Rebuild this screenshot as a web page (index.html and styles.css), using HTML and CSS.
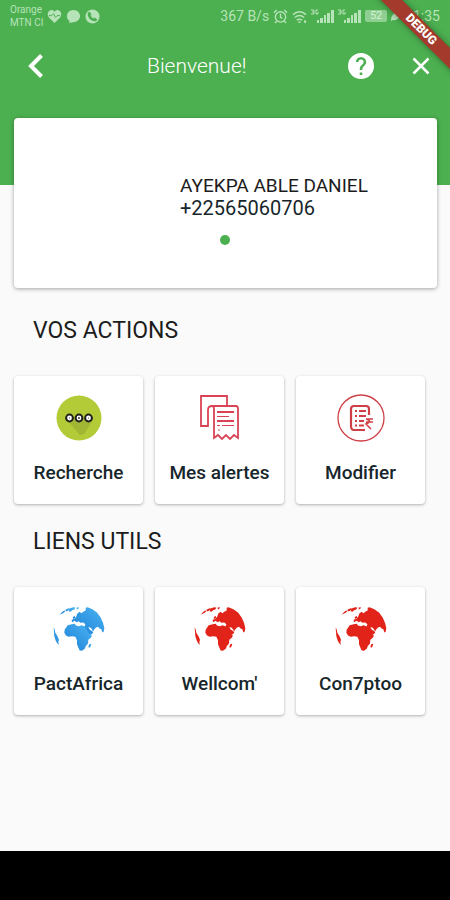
FILE: index.html
```html
<!DOCTYPE html>
<html lang="fr">
<head>
<meta charset="utf-8">
<meta name="viewport" content="width=device-width, initial-scale=1">
<title>Bienvenue!</title>
<link rel="stylesheet" href="styles.css">
</head>
<body>
<svg class="defs" aria-hidden="true">
  <defs>
    <linearGradient id="sky" x1="0" y1="1" x2="1" y2="0">
      <stop offset="0" stop-color="#1b7fd6"/>
      <stop offset="1" stop-color="#4bb4f2"/>
    </linearGradient>
    <symbol id="globe" viewBox="155 92 162 141">
      <path d="M160 158L163 163 165 174 172 185 176 195 174 202 176 210 171 206 166 197 162 184 161 171z"/>
      <path d="M178 120L186 111 192 107 195 109 190 114 184 117zM195 105L205 100 209 102 203 108 197 110zM208 101L218 97 225 98 222 104 215 106 211 111 205 109z"/>
      <path d="M229 98L236 97 234 102 229 104zM217 128L222 123 225 128 220 133z"/>
      <path d="M228 124L231 116 238 111 243 115 250 110 256 107 256 99 262 97 276 103 290 113 301 128 308 144 312 160 310 171 306 173 303 163 298 161 293 156 287 158 281 165 278 171 275 163 270 158 264 157 268 164 274 168 279 173 274 178 266 181 262 176 257 167 252 156 255 148 249 143 240 144 235 139 229 142 223 138 215 142 214 135 223 132z"/>
      <path d="M202 151L214 148 223 147 227 152 236 154 243 151 252 154 258 163 265 175 274 181 273 187 264 195 263 206 256 214 254 221 245 228 238 227 234 218 230 208 230 196 225 186 216 184 205 186 197 182 192 174 193 165z"/>
      <path d="M269 207L273 208 269 218 264 217 266 210z"/>
    </symbol>
    <symbol id="signal" viewBox="0 0 23 16">
      <path d="M6 12h2v3H6zM9 10h3v5H9zM13 7h2v8h-2zM16 5h3v10h-3zM20 2h3v13h-3z"/>
      <path d="M0 2h3v4H0M1 4h2M7 2H5v4h2V4" fill="none" stroke="currentColor"/>
    </symbol>
  </defs>
</svg>
<div class="screen">
  <header class="top">
    <div class="status">
      <div class="carriers"><span>Orange</span><span>MTN CI</span></div>
      <svg class="s-icon" viewBox="0 0 16 16"><path d="M8 15L2 9C-1 5 2 1 5 1q2 0 3 2 1-2 3-2c3 0 6 4 3 8z"/><path class="cut" d="M2 7h3l2-2 2 4 2-2h3"/></svg>
      <svg class="s-icon" viewBox="0 0 16 16"><path d="M8 1c4 0 7 3 7 6.500S12 14 8 14L3 15l1-2C2 12 1 10 1 7.500 1 4 4 1 8 1z"/></svg>
      <svg class="s-icon" viewBox="0 0 16 16"><circle cx="8" cy="8" r="7.500"/><path class="fill-green" d="M5 3l2 3-1 1q1 2 3 3l1-1 3 2-1 2C7 14 2 9 3 4z"/></svg>
      <span class="speed">367 B/s</span>
      <svg class="s-icon" viewBox="0 0 16 16"><path class="line" d="M1 4l3-3M15 4l-3-3M8 5v4l2 1M4 13l-2 2M12 13l2 2"/><circle class="line" cx="8" cy="8.500" r="5.500"/></svg>
      <svg class="s-icon" viewBox="0 0 16 16"><path class="line" d="M1 6q7-6 14 0M3 9q5-4 10 0M5 12q3-2 6 0"/><path d="M7 13h2v2H7zM13 12h2v3h-2z"/></svg>
      <svg class="s-signal"><use href="#signal"/></svg>
      <svg class="s-signal"><use href="#signal"/></svg>
      <span class="battery">52</span>
      <svg class="s-leaf" viewBox="0 0 10 12"><path d="M0 11C0 5 3 2 10 1 10 7 6 11 2 10z"/></svg>
      <span class="time">11:35</span>
    </div>
    <div class="appbar">
      <button class="back" aria-label="Retour"><svg viewBox="0 0 16 26"><path d="M13.500 2.500L3 13l10.500 10.500"/></svg></button>
      <h1>Bienvenue!</h1>
      <button class="help" aria-label="Aide"><svg viewBox="0 0 24 24"><path d="M12 0a12 12 0 1 0 0 24 12 12 0 0 0 0-24zm1.200 20.400h-2.400V18h2.400zm2.500-9.300l-1.100 1.100c-.9.900-1.400 1.600-1.400 3.400h-2.400V15c0-1.300.5-2.500 1.400-3.400l1.500-1.500c.4-.4.700-1 .7-1.700a2.400 2.400 0 0 0-4.800 0H7.200a4.800 4.800 0 0 1 9.600 0c0 1-.4 2-1.100 2.700z"/></svg></button>
      <button class="close" aria-label="Fermer"><svg viewBox="0 0 18 18"><path d="M1.500 1.500l15 15M16.500 1.500l-15 15"/></svg></button>
    </div>
  </header>
  <div class="ribbon-box"><span class="ribbon">DEBUG</span></div>
  <main>
    <section class="profile">
      <div class="identity">
        <p class="name">AYEKPA ABLE DANIEL</p>
        <p class="phone">+22565060706</p>
        <span class="dot"></span>
      </div>
    </section>
    <h2>VOS ACTIONS</h2>
    <div class="tiles">
      <button class="tile">
        <svg viewBox="0 0 48 48">
          <circle cx="24" cy="24" r="22.500" fill="#b2cb37"/>
          <path d="M12 26l13 15 4-1 9-14z" fill="#a1b733"/>
          <g fill="#fff" stroke="#20201c" stroke-width="2"><circle cx="14.500" cy="24" r="3.400"/><circle cx="24" cy="24" r="3.400"/><circle cx="33.500" cy="24" r="3.400"/></g>
          <path d="M14.500 23.500v1M23 24h2M24 23v2M33.500 23.500v1" stroke="#20201c" stroke-width=".8" fill="none"/>
        </svg>
        <span>Recherche</span>
      </button>
      <button class="tile">
        <svg viewBox="0 0 48 48" fill="none" stroke="#d94355" stroke-width="1.800">
          <path d="M31 12V2H5v30h6M11 32h1V16q0-4 4-4h24q2 0 2 3v29l-4-3-4 4-4-4-4 4-4-4-4 3V15q0-3-2-3M5 32h7"/>
          <path d="M21 18h17M21 27h17" stroke-width="2"/>
          <path d="M21 22.500h12M21 31.500h3M26 31.500h12M22 36h2" stroke-width="1.200"/>
        </svg>
        <span>Mes alertes</span>
      </button>
      <button class="tile">
        <svg viewBox="0 0 48 48" fill="none" stroke="#cf4046">
          <circle cx="24" cy="24" r="23" stroke-width="1.300"/>
          <path d="M32 21v-6q0-3-3-3H17q-3 0-3 3v17q0 4 3 4h11" stroke-width="2.200"/>
          <path d="M18 17h2M22 17h7M18 22h2M22 22h7M18 27h2M22 27h5M18 31.500h2M22 31.500h5" stroke-width="2"/>
          <path d="M29 25h7M29 28h7M29 25q7 2 0 5l5 5" stroke-width="1.600"/>
        </svg>
        <span>Modifier</span>
      </button>
    </div>
    <h2>LIENS UTILS</h2>
    <div class="tiles">
      <a class="tile" href="#pactafrica"><svg class="world blue"><use href="#globe"/></svg><span>PactAfrica</span></a>
      <a class="tile" href="#wellcom"><svg class="world red"><use href="#globe"/></svg><span>Wellcom'</span></a>
      <a class="tile" href="#con7ptoo"><svg class="world red"><use href="#globe"/></svg><span>Con7ptoo</span></a>
    </div>
  </main>
  <footer class="navbar"></footer>
</div>
</body>
</html>
```

FILE: styles.css
```css
* { box-sizing: border-box; }
body {
  margin: 0;
  background: #fafafa;
  color: #17262b;
  font-family: Roboto, "Liberation Sans", sans-serif;
}
h1, h2, p { margin: 0; font-weight: 400; }
button {
  border: 0;
  padding: 0;
  background: none;
  font: inherit;
  color: inherit;
}
svg { display: block; flex: none; }
.defs { position: absolute; width: 0; height: 0; }
.screen {
  position: relative;
  display: flex;
  flex-direction: column;
  min-height: 100vh;
}
.top {
  height: 185px;
  background: #4caf50;
  color: #fff;
}
.status {
  display: flex;
  align-items: center;
  gap: 4px;
  height: 32px;
  padding: 0 10px;
  color: #b7e3b8;
  fill: currentColor;
  font-size: 14px;
}
.carriers {
  display: flex;
  flex-direction: column;
  font-size: 10px;
  line-height: 13px;
}
.s-icon { width: 15px; height: 15px; }
.s-signal { width: 23px; height: 16px; }
.s-leaf { width: 10px; height: 12px; }
.line, .cut { fill: none; stroke: currentColor; stroke-width: 1.5; }
.cut { stroke: #4caf50; stroke-width: 1; }
.fill-green { fill: #4caf50; }
.speed { margin-left: auto; }
.battery {
  width: 22px;
  height: 12px;
  border-radius: 2px;
  background: #8fcf92;
  color: #d5f0d5;
  font-size: 11px;
  line-height: 12px;
  text-align: center;
}
.appbar {
  display: flex;
  align-items: center;
  height: 68px;
  padding: 0 20px 0 28px;
}
.appbar h1 {
  flex: 1;
  padding-left: 103px;
  font-size: 21px;
  font-weight: 300;
}
.back svg { width: 16px; height: 26px; fill: none; stroke: #fff; stroke-width: 4; }
.help { margin-right: 38px; }
.help svg { width: 26px; height: 26px; fill: #fff; }
.close svg { width: 18px; height: 18px; fill: none; stroke: #fff; stroke-width: 2.5; }
.ribbon-box {
  position: absolute;
  top: 0;
  right: 0;
  width: 90px;
  height: 90px;
  overflow: hidden;
}
.ribbon {
  position: absolute;
  top: 22px;
  right: -41px;
  width: 140px;
  height: 15px;
  background: #a33a2b;
  box-shadow: 0 0 6px rgba(0, 0, 0, .4);
  color: #fff;
  font-size: 12px;
  font-weight: 900;
  line-height: 15px;
  text-align: center;
  transform: rotate(45deg);
}
main {
  flex: 1;
  margin-top: -67px;
  padding: 0 13px 24px 14px;
}
.profile {
  display: flex;
  height: 170px;
  padding: 56px 0 0 166px;
  border-radius: 4px;
  background: #fff;
  box-shadow: 0 1px 4px rgba(0, 0, 0, .35);
}
.identity { line-height: 23px; }
.name { color: #1c1c1c; font-size: 19px; }
.phone { font-size: 20px; }
.dot {
  display: block;
  width: 10px;
  height: 10px;
  margin: 15px 0 0 40px;
  border-radius: 50%;
  background: #4caf50;
}
h2 {
  padding: 25px 19px 32px;
  color: #1c1c1c;
  font-size: 23px;
  line-height: 26px;
}
.profile + h2 { padding-top: 30px; }
.tiles {
  display: grid;
  grid-template-columns: repeat(3, 1fr);
  gap: 12px;
  padding-right: 12px;
}
.tile {
  display: flex;
  flex-direction: column;
  align-items: center;
  gap: 20px;
  height: 128px;
  padding-top: 18px;
  border-radius: 4px;
  background: #fff;
  box-shadow: 0 1px 3px rgba(0, 0, 0, .3);
  color: inherit;
  font-size: 19px;
  font-weight: 500;
  line-height: 22px;
  text-decoration: none;
}
.tile svg { width: 48px; height: 48px; }
.tile .world { width: 54px; }
.blue { fill: url(#sky); }
.red { fill: #e2231a; }
.navbar {
  height: 49px;
  background: #000;
}
```
